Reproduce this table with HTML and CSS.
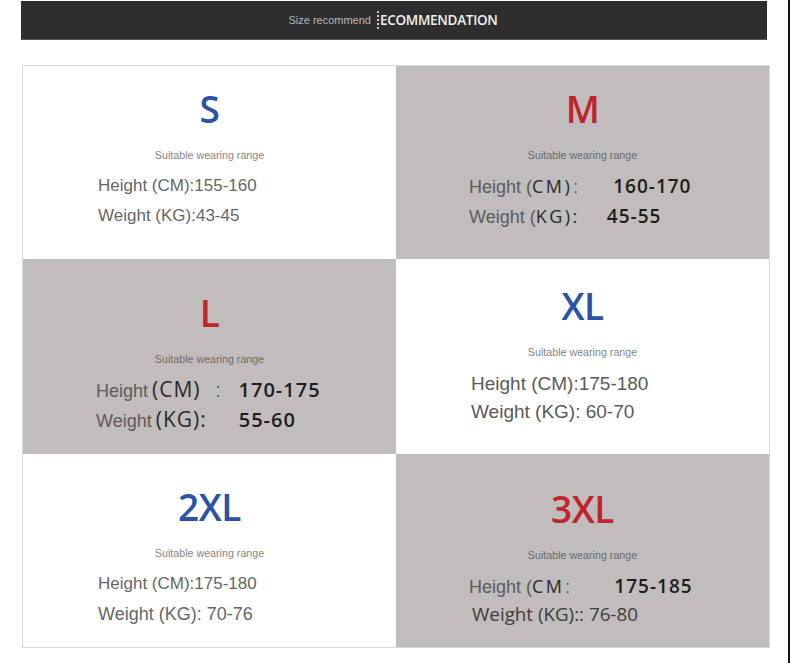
FILE: index.html
```html
<!DOCTYPE html>
<html lang="en">
<head>
<meta charset="utf-8">
<title>Size recommendation</title>
<link rel="stylesheet" href="styles.css">
</head>
<body>
<div class="page">
  <main class="content">
    <header class="banner">
      <span class="banner-small">Size recommend</span>
      <span class="banner-big">ECOMMENDATION</span>
    </header>
    <section class="grid">
      <div class="cell white pad-s">
        <div class="size blue">S</div>
        <div class="caption">Suitable wearing range</div>
        <div class="lines">
          <div class="line">Height (CM):155-160</div>
          <div class="line">Weight (KG):43-45</div>
        </div>
      </div>
      <div class="cell gray pad-m">
        <div class="size red">M</div>
        <div class="caption">Suitable wearing range</div>
        <div class="lines">
          <div class="line mixed"><span class="lbl">Height (</span><span class="unit">CM)</span><span class="unit thin">:</span><span class="num gap-m1">160-170</span></div>
          <div class="line mixed"><span class="lbl">Weight (</span><span class="unit">KG):</span><span class="num gap-m2">45-55</span></div>
        </div>
      </div>
      <div class="cell gray pad-l">
        <div class="size red">L</div>
        <div class="caption">Suitable wearing range</div>
        <div class="lines">
          <div class="line mixed large"><span class="lbl">Height</span><span class="unit gap-u">(CM)</span><span class="unit thin gap-c">:</span><span class="num gap-l1">170-175</span></div>
          <div class="line mixed large"><span class="lbl">Weight</span><span class="unit gap-u">(KG):</span><span class="num gap-l2">55-60</span></div>
        </div>
      </div>
      <div class="cell white pad-xl">
        <div class="size blue">XL</div>
        <div class="caption">Suitable wearing range</div>
        <div class="lines tight">
          <div class="line big">Height (CM):175-180</div>
          <div class="line big">Weight (KG): 60-70</div>
        </div>
      </div>
      <div class="cell white pad-2xl">
        <div class="size blue">2XL</div>
        <div class="caption">Suitable wearing range</div>
        <div class="lines">
          <div class="line">Height (CM):175-180</div>
          <div class="line mid">Weight (KG): 70-76</div>
        </div>
      </div>
      <div class="cell gray pad-3xl">
        <div class="size red">3XL</div>
        <div class="caption">Suitable wearing range</div>
        <div class="lines">
          <div class="line mixed"><span class="lbl">Height (</span><span class="unit">CM</span><span class="unit thin">:</span><span class="num gap-x1">175-185</span></div>
          <div class="line open">Weight (KG):: 76-80</div>
        </div>
      </div>
    </section>
  </main>
  <div class="edge"></div>
</div>
</body>
</html>
```

FILE: styles.css
```css
html, body {
  margin: 0;
  padding: 0;
  background: #ffffff;
}

.page {
  display: flex;
  width: 790px;
  height: 663px;
  overflow: hidden;
}

.content {
  flex: 1;
  padding-left: 21px;
  padding-top: 1px;
}

.edge {
  width: 2px;
  background: #141414;
}

.banner {
  width: 746px;
  height: 39px;
  background: #2e2e2e;
  display: flex;
  align-items: center;
  justify-content: center;
  gap: 6px;
  box-sizing: border-box;
  padding-right: 2px;
  border-bottom: 1px solid #555;
}

.banner-small {
  font-family: "Liberation Sans", Arial, sans-serif;
  font-size: 11px;
  color: #b8b8b8;
}

.banner-big {
  font-family: "Open Sans", "Liberation Sans", sans-serif;
  font-weight: 600;
  font-size: 13.5px;
  letter-spacing: -0.3px;
  color: #f2f2f2;
  border-left: 2px dotted #cfcfcf;
  padding-left: 1px;
}

.grid {
  margin-top: 25px;
  margin-left: 1px;
  width: 746px;
  display: grid;
  grid-template-columns: 373px 373px;
  grid-template-rows: 193px 195px 193px;
  border: 1px solid #d9d9d9;
}

.cell {
  display: flex;
  flex-direction: column;
  box-sizing: border-box;
}

.white { background: #ffffff; }
.gray { background: #c1bdbc; }

.pad-s { padding-top: 23px; }
.pad-m { padding-top: 23px; }
.pad-l { padding-top: 34px; }
.pad-xl { padding-top: 27px; }
.pad-2xl { padding-top: 33px; }
.pad-3xl { padding-top: 35px; }

.size {
  text-align: center;
  font-family: "Open Sans", "DejaVu Sans", sans-serif;
  font-weight: 600;
  font-size: 37px;
  line-height: 40px;
  letter-spacing: -0.5px;
}

.blue { color: #2a52a8; }
.red { color: #c0242c; }

.caption {
  margin-top: 19px;
  text-align: center;
  font-family: "Liberation Sans", Arial, sans-serif;
  font-size: 10.7px;
  line-height: 14px;
  color: #888585;
}

.gray .caption { color: #6e6a69; }

.lines {
  margin-top: 9px;
  padding-left: 75px;
}

.gray .lines { padding-left: 73px; }

.pad-xl .lines { margin-top: 11px; }

.line {
  font-family: "Liberation Sans", Arial, sans-serif;
  font-size: 17px;
  line-height: 30px;
  color: #666;
  white-space: nowrap;
}

.lines.tight .line { line-height: 28px; }

.line.big {
  font-size: 19px;
  color: #5a5a5a;
}

.line.mid { font-size: 18px; }

.line.open {
  font-family: "Open Sans", "Liberation Sans", sans-serif;
  font-size: 18.8px;
  line-height: 27px;
  color: #3e3c3c;
  padding-left: 3px;
}

.line.mixed {
  height: 30px;
  box-sizing: border-box;
  padding-top: 2px;
}

.mixed > span {
  line-height: 20px;
}

.mixed .lbl {
  color: #5e5b5b;
  font-size: 18px;
}

.mixed .unit {
  font-family: "Open Sans", "DejaVu Sans", sans-serif;
  font-size: 18px;
  letter-spacing: 2.5px;
  color: #2b2a2a;
}

.mixed.large .unit {
  font-size: 21px;
  letter-spacing: 1px;
}

.mixed .thin {
  font-weight: 300;
  padding-left: 1px;
}

.mixed .num {
  display: inline-block;
  font-family: "Open Sans", "DejaVu Sans", sans-serif;
  font-weight: 600;
  font-size: 19px;
  letter-spacing: 1px;
  color: #1e1d1d;
}

.mixed.large .num {
  font-size: 20px;
}

.gap-u { margin-left: 4px; }
.gap-c { margin-left: 14px; }
.gap-m1 { margin-left: 33px; }
.gap-m2 { margin-left: 27px; }
.gap-l1 { margin-left: 17px; }
.gap-l2 { margin-left: 32px; }
.gap-x1 { margin-left: 42px; }
```
